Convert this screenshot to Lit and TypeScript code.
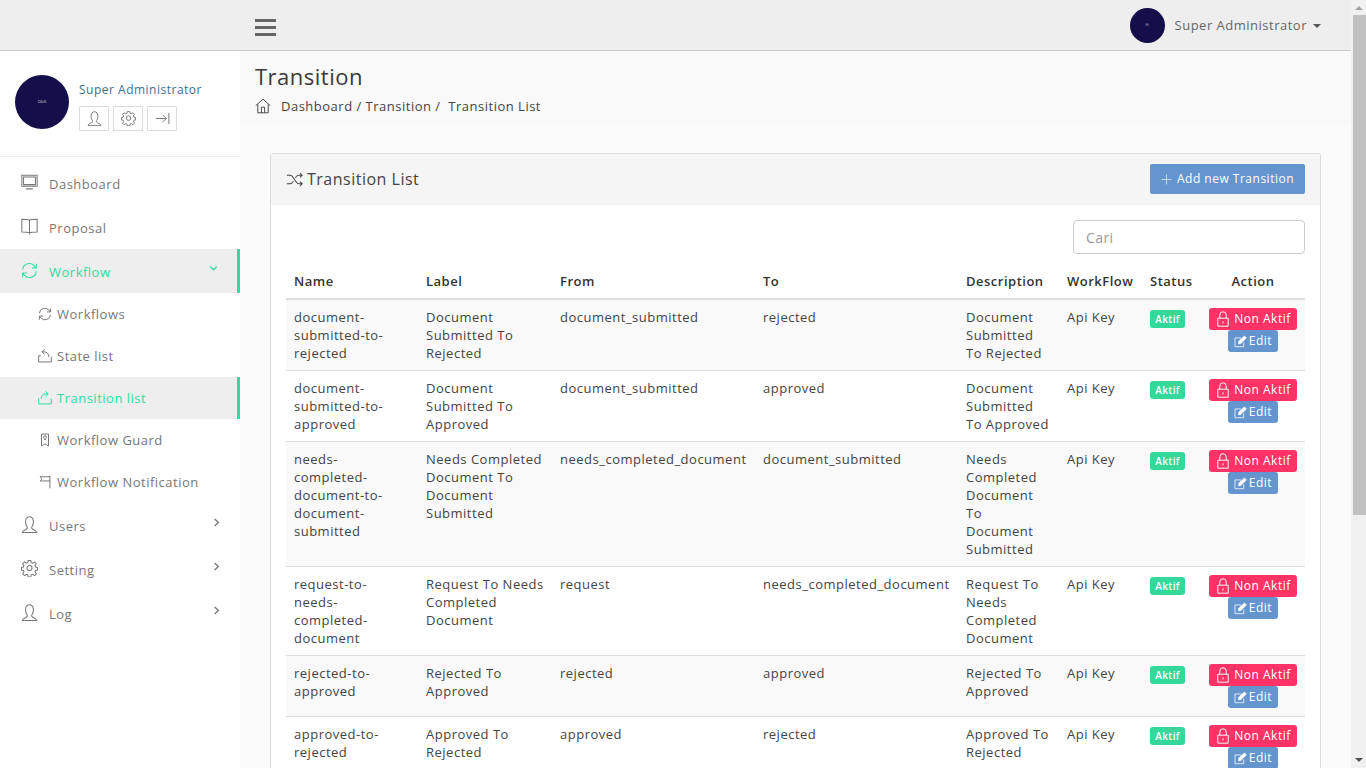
import { LitElement, html, css, svg } from 'lit'
import { customElement } from 'lit/decorators.js'

// thin line icons, 20 unit box
const icons: Record<string, any> = {
  user: svg`<path d="M1.500 19.500h17c0-2.600-4.600-3.400-5.600-4.600-.4-.6-.4-1.600 0-2.300 1.200-1.600 1.700-3.400 1.700-5.600C14.600 3 12.600 1 10 1S5.400 3 5.400 7c0 2.200.5 4 1.700 5.600.4.7.4 1.700 0 2.300-1 1.200-5.600 2-5.600 4.600z"/>`,
  gear: svg`<path d="M8.500 .5h3l.5 2.600 1.700.7 2.200-1.500 2.100 2.100-1.500 2.200.7 1.700 2.300.5v3l-2.300.5-.7 1.700 1.500 2.200-2.100 2.100-2.200-1.500-1.700.7-.5 2.500h-3l-.5-2.500-1.700-.7-2.200 1.500-2.100-2.100 1.500-2.200-.7-1.700-2.300-.5v-3l2.300-.5.7-1.700-1.500-2.200 2.100-2.100 2.200 1.500 1.700-.7z"/><circle cx="10" cy="9.500" r="3"/>`,
  logout: svg`<path d="M1 10h14M10.500 5.500 15 10l-4.500 4.500M18.500 2.500v15"/>`,
  home: svg`<path d="M1 9.500 10 1.500l9 8M3.500 8v10.500h13V8M8 18.500v-7h4v7"/>`,
  monitor: svg`<path d="M1 1.500h18v13H1zM3 3.500h14v9H3zM6 17.500h8"/>`,
  book: svg`<path d="M10 2.500C8.500 1.500 5 1.500 1 1.500v15c3.500 0 7 0 9 1 2-1 5.500-1 9-1v-15c-4 0-7.500 0-9 1zM10 2.500V19"/>`,
  refresh: svg`<path d="M2 9a8 8 0 0 1 14-4.500L18 7M18 2v5h-5M18 11a8 8 0 0 1-14 4.500L2 13M2 18v-5h5"/>`,
  stateBox: svg`<path d="M1 18.500V9.500h3M19 11v7.500H1M9.500.5 5.500 4l4 3.500M5.500 4h3c4.500 0 7 3 7 7.500"/>`,
  transBox: svg`<path d="M19 18.500V11M1 10v8.500h18M10.500.5l4 3.500-4 3.500M14.500 4h-3c-4.500 0-7 3-7 7.500"/>`,
  guard: svg`<path d="M5 1.500h10v17l-5-3-5 3zM10 4a2 2 0 0 0-2 2c0 1.500 2 2 2 4 0-2 2-2.500 2-4a2 2 0 0 0-2-2z"/>`,
  flag: svg`<path d="M17 1v18M17 2.500H3l2.500 3L3 8.500h14"/>`,
  shuffle: svg`<path d="M1 5h4c4 0 6 10 10 10h4M1 15h4c1.500 0 2.700-1.400 3.800-3M11 8c1-1.600 2.400-3 4-3h4M16.500 2.500 19 5l-2.500 2.500M16.500 12.500 19 15l-2.500 2.500"/>`,
  plus: svg`<path d="M10 1v18M1 10h18"/>`,
  lock: svg`<path d="M3.500 9h13v10h-13zM6 9V5a4 4 0 0 1 8 0v4M10 13v2.500"/>`,
  edit: svg`<path d="M15 11.500V18H1.500V4.500H11"/><path fill="currentColor" d="M7.500 9.500 16 1.500l3 3-8.500 8.500-3.500.5z"/>`,
  chevDown: svg`<path stroke-width="3" d="M3 6l7 7 7-7"/>`,
  chevRight: svg`<path stroke-width="3" d="M6 2l8 8-8 8"/>`,
}

const icon = (name: string, size = 16) => html`<svg
  class="ico"
  width=${size}
  height=${size}
  viewBox="0 0 20 20"
  fill="none"
  stroke="currentColor"
  stroke-width="1.200"
>${icons[name]}</svg>`

const rows = [
  ['document-submitted-to-rejected', 'Document Submitted To Rejected', 'document_submitted', 'rejected', 'Document Submitted To Rejected'],
  ['document-submitted-to-approved', 'Document Submitted To Approved', 'document_submitted', 'approved', 'Document Submitted To Approved'],
  ['needs-completed-document-to-document-submitted', 'Needs Completed Document To Document Submitted', 'needs_completed_document', 'document_submitted', 'Needs Completed Document To Document Submitted'],
  ['request-to-needs-completed-document', 'Request To Needs Completed Document', 'request', 'needs_completed_document', 'Request To Needs Completed Document'],
  ['rejected-to-approved', 'Rejected To Approved', 'rejected', 'approved', 'Rejected To Approved'],
  ['approved-to-rejected', 'Approved To Rejected', 'approved', 'rejected', 'Approved To Rejected'],
]

@customElement('app-root')
export class AppRoot extends LitElement {
  static styles = css`
    :host {
      display: flex;
      width: 1366px;
      height: 768px;
      overflow: hidden;
      font-family: 'Open Sans', sans-serif;
      font-size: 13px;
      line-height: 18px;
      letter-spacing: 0.5px;
      color: #444;
      background: #fff;
    }
    .ico { display: block; flex: none; }

    .page { width: 1351px; height: 768px; display: flex; flex-direction: column; }

    .topbar {
      height: 50px;
      flex: none;
      display: flex;
      align-items: center;
      background: #eee;
      border-bottom: 1px solid #ccc;
      box-sizing: content-box;
    }
    .burger {
      margin-left: 255px;
      width: 21px;
      display: flex;
      flex-direction: column;
      gap: 4px;
      margin-top: 5px;
    }
    .burger i { display: block; height: 3px; background: #666; }
    .top-user {
      margin-left: auto;
      margin-right: 30px;
      display: flex;
      align-items: center;
      color: #666;
    }
    .top-user .avatar { width: 35px; height: 35px; margin-right: 10px; font-size: 3px; }
    .caret {
      margin-left: 6px;
      margin-top: 2px;
      border-left: 4px solid transparent;
      border-right: 4px solid transparent;
      border-top: 4px solid #555;
    }
    .avatar {
      border-radius: 50%;
      background: #140f4b;
      color: #ddd;
      display: flex;
      align-items: center;
      justify-content: center;
      flex: none;
      letter-spacing: 0;
    }

    .body { flex: 1; display: flex; min-height: 0; }

    aside { width: 240px; flex: none; background: #fff; }
    .profile {
      height: 105px;
      box-sizing: content-box;
      border-bottom: 1px solid #eee;
      display: flex;
      align-items: flex-start;
      padding-left: 15px;
      gap: 10px;
    }
    .profile .avatar { width: 54px; height: 54px; font-size: 4px; margin-top: 24px; }
    .profile-name { color: #3d6f8f; font-size: 12px; margin: 30px 0 7px; }
    .tools { display: flex; gap: 4px; }
    .tools span {
      width: 30px;
      height: 25px;
      box-sizing: border-box;
      border: 1px solid #ddd;
      display: flex;
      align-items: center;
      justify-content: center;
      color: #777;
    }
    .tools .ico { stroke-width: 1.3; }

    nav { padding-top: 4px; }
    nav a {
      display: flex;
      align-items: center;
      height: 44px;
      padding: 1px 0 0 21px;
      color: #777;
      box-sizing: border-box;
    }
    nav a .label { margin-left: 11px; }
    nav a .chev { margin-left: auto; margin-right: 19px; margin-top: -6px; }
    nav a.sub { height: 42px; padding: 0 0 0 38px; }
    nav a.sub .label { margin-left: 5px; }
    nav a.sub .ico { stroke-width: 1.4; }
    nav a.active { color: #2fdc9f; background: #eee; border-right: 3px solid #2fdc9f; }
    nav a .ic { margin-top: -3px; }
    nav a.sub .ic { margin-top: 0; }

    main { flex: 1; min-width: 0; background: #fbfbfb; }
    .title {
      height: 74px;
      padding: 9px 15px 0;
      box-sizing: border-box;
      background: #f9f9f9;
    }
    h1 { margin: 0; font-size: 22px; font-weight: 400; line-height: 32px; letter-spacing: 0.5px; color: #3a3a3a; }
    .crumbs { display: flex; align-items: center; margin-top: 5px; }
    .crumbs .ico { margin-right: 10px; margin-top: -1px; }
    .content { padding: 28px 30px 0; }

    .card {
      background: #fff;
      border: 1px solid #ddd;
      border-bottom: 0;
      border-radius: 3px 3px 0 0;
    }
    .card-head {
      height: 51px;
      box-sizing: border-box;
      display: flex;
      align-items: center;
      padding: 0 15px;
      background: #f5f5f5;
      border-bottom: 1px solid #eee;
    }
    .card-head .t { display: flex; align-items: center; font-size: 16px; gap: 4px; }
    .add {
      margin-left: auto;
      height: 30px;
      width: 155px;
      display: flex;
      align-items: center;
      justify-content: center;
      gap: 5px;
      background: #6495cf;
      color: #fff;
      font-size: 12px;
      border-radius: 2px;
    }
    .card-body { padding: 15px 15px 0; }
    .search {
      display: block;
      margin-left: auto;
      width: 232px;
      height: 34px;
      box-sizing: border-box;
      border: 1px solid #ccc;
      border-radius: 4px;
      padding: 0 12px;
      font: inherit;
      font-size: 14px;
      letter-spacing: 0.4px;
      color: #333;
      background: #fff;
    }
    .search::placeholder { color: #999; }

    table { width: 1019px; table-layout: fixed; border-collapse: collapse; margin-top: 10px; }
    th {
      text-align: left;
      padding: 8px;
      font-weight: 600;
      color: #333;
      border-bottom: 2px solid #ddd;
    }
    td { padding: 8px; vertical-align: top; border-top: 1px solid #ddd; }
    td:first-child { padding-right: 12px; }
    tbody tr:first-child td { border-top: 0; }
    tbody tr:nth-child(odd) { background: #f9f9f9; }
    th.act { text-align: center; }
    .acts { display: flex; flex-direction: column; align-items: center; }
    .tag {
      display: block;
      width: 35px;
      margin-top: 2px;
      text-align: center;
      background: #34d89a;
      color: #fff;
      font-size: 10px;
      font-weight: 600;
      line-height: 18px;
      border-radius: 3px;
      letter-spacing: 0.4px;
    }
    .btn {
      display: flex;
      align-items: center;
      justify-content: center;
      height: 22px;
      color: #fff;
      font-size: 12px;
      border-radius: 3px;
    }
    .btn.off { background: #ff3366; width: 88px; gap: 3px; }
    .btn.edit { background: #6495cf; width: 50px; gap: 2px; }

    .scrollbar { width: 15px; flex: none; background: #f1f1f1; display: flex; flex-direction: column; align-items: center; }
    .scrollbar .up {
      margin: 6px 0 5px;
      border-left: 4px solid transparent;
      border-right: 4px solid transparent;
      border-bottom: 4px solid #a3a3a3;
    }
    .scrollbar .thumb { width: 13px; margin-left: 2px; height: 500px; background: #c1c1c1; }
    .scrollbar .down {
      margin-top: auto;
      margin-bottom: 6px;
      border-left: 4px solid transparent;
      border-right: 4px solid transparent;
      border-top: 4px solid #505050;
    }
  `

  private navItem(ic: string, label: string, cls = '', chev = '') {
    const sub = cls.includes('sub')
    return html`<a class=${cls}>
      <span class="ic">${icon(ic, sub ? 14 : 17)}</span>
      <span class="label">${label}</span>
      ${chev ? html`<span class="chev">${icon(chev, 9)}</span>` : ''}
    </a>`
  }

  render() {
    return html`
      <div class="page">
        <header class="topbar">
          <div class="burger"><i></i><i></i><i></i></div>
          <div class="top-user">
            <div class="avatar">Hi</div>
            <span>Super Administrator</span>
            <span class="caret"></span>
          </div>
        </header>
        <div class="body">
          <aside>
            <div class="profile">
              <div class="avatar">OkiS</div>
              <div>
                <div class="profile-name">Super Administrator</div>
                <div class="tools">
                  <span>${icon('user', 15)}</span>
                  <span>${icon('gear', 15)}</span>
                  <span>${icon('logout', 15)}</span>
                </div>
              </div>
            </div>
            <nav>
              ${this.navItem('monitor', 'Dashboard')}
              ${this.navItem('book', 'Proposal')}
              ${this.navItem('refresh', 'Workflow', 'active', 'chevDown')}
              ${this.navItem('refresh', 'Workflows', 'sub')}
              ${this.navItem('stateBox', 'State list', 'sub')}
              ${this.navItem('transBox', 'Transition list', 'sub active')}
              ${this.navItem('guard', 'Workflow Guard', 'sub')}
              ${this.navItem('flag', 'Workflow Notification', 'sub')}
              ${this.navItem('user', 'Users', '', 'chevRight')}
              ${this.navItem('gear', 'Setting', '', 'chevRight')}
              ${this.navItem('user', 'Log', '', 'chevRight')}
            </nav>
          </aside>
          <main>
            <div class="title">
              <h1>Transition</h1>
              <div class="crumbs">
                ${icon('home', 16)}
                <span>Dashboard / Transition /&nbsp; Transition List</span>
              </div>
            </div>
            <div class="content">
              <section class="card">
                <div class="card-head">
                  <div class="t">${icon('shuffle', 17)}Transition List</div>
                  <div class="add">${icon('plus', 11)}Add new Transition</div>
                </div>
                <div class="card-body">
                  <input class="search" placeholder="Cari" />
                  <table>
                    <colgroup>
                      <col style="width:132px" /><col style="width:134px" /><col style="width:203px" />
                      <col style="width:203px" /><col style="width:101px" /><col style="width:83px" />
                      <col style="width:59px" /><col style="width:104px" />
                    </colgroup>
                    <thead>
                      <tr>
                        <th>Name</th><th>Label</th><th>From</th><th>To</th>
                        <th>Description</th><th>WorkFlow</th><th>Status</th>
                        <th class="act">Action</th>
                      </tr>
                    </thead>
                    <tbody>
                      ${rows.map(
                        (r) => html`<tr>
                          ${r.map((c) => html`<td>${c}</td>`)}
                          <td>Api Key</td>
                          <td><span class="tag">Aktif</span></td>
                          <td>
                            <div class="acts">
                              <span class="btn off">${icon('lock', 16)}Non Aktif</span>
                              <span class="btn edit">${icon('edit', 13)}Edit</span>
                            </div>
                          </td>
                        </tr>`
                      )}
                    </tbody>
                  </table>
                </div>
              </section>
            </div>
          </main>
        </div>
      </div>
      <div class="scrollbar"><span class="up"></span><div class="thumb"></div><span class="down"></span></div>
    `
  }
}
